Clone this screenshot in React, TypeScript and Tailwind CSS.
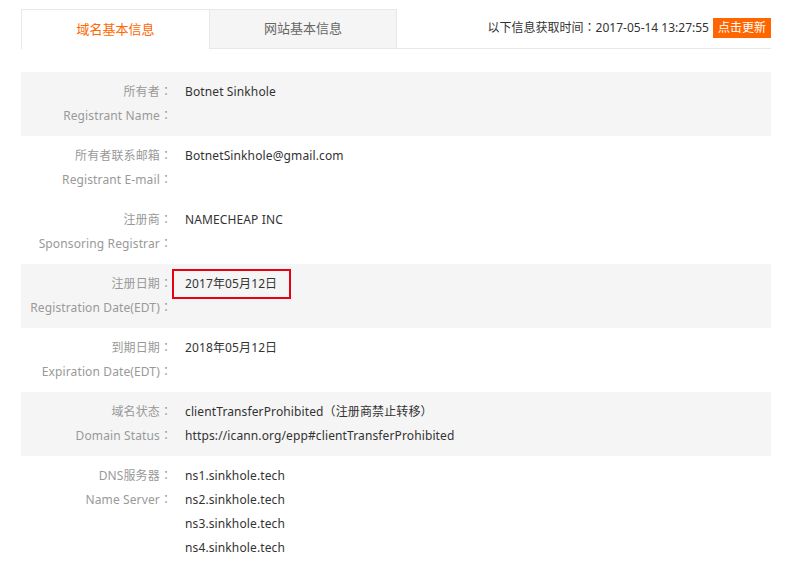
import React from "react";

interface InfoRow {
  label: string;
  labelEn: string;
  values: React.ReactNode[];
  gray: boolean;
  highlight?: boolean;
}

// full-width punctuation centred like the original font does
const Wide: React.FC<{ ch: string }> = ({ ch }) => (
  <span className="font-['Noto_Sans_CJK_JP'] leading-none">{ch}</span>
);

const rows: InfoRow[] = [
  { label: "所有者", labelEn: "Registrant Name", values: ["Botnet Sinkhole"], gray: true },
  { label: "所有者联系邮箱", labelEn: "Registrant E-mail", values: ["BotnetSinkhole@gmail.com"], gray: false },
  { label: "注册商", labelEn: "Sponsoring Registrar", values: ["NAMECHEAP INC"], gray: false },
  { label: "注册日期", labelEn: "Registration Date(EDT)", values: ["2017年05月12日"], gray: true, highlight: true },
  { label: "到期日期", labelEn: "Expiration Date(EDT)", values: ["2018年05月12日"], gray: false },
  {
    label: "域名状态",
    labelEn: "Domain Status",
    values: [
      <>
        clientTransferProhibited
        <Wide ch="（" />
        注册商禁止转移
        <Wide ch="）" />
      </>,
      "https://icann.org/epp#clientTransferProhibited",
    ],
    gray: true,
  },
  {
    label: "DNS服务器",
    labelEn: "Name Server",
    values: ["ns1.sinkhole.tech", "ns2.sinkhole.tech", "ns3.sinkhole.tech", "ns4.sinkhole.tech"],
    gray: false,
  },
];

const Row: React.FC<{ row: InfoRow }> = ({ row }) => {
  return (
    <div className={`flex py-2 text-[12px] leading-6 tracking-[0.12px] ${row.gray ? "bg-[#f5f5f5]" : "bg-white"}`}>
      <div className="w-[151px] shrink-0 text-right text-[#999]">
        <div className="h-6">
          {row.label}
          <Wide ch="：" />
        </div>
        <div className="h-6">
          {row.labelEn}
          <Wide ch="：" />
        </div>
      </div>
      <div className="pl-[13px] text-[#333]">
        {row.values.map((v, i) =>
          row.highlight ? (
            <div key={i} className="-ml-[13px] -my-[3px] h-[30px] w-[119px] border-2 border-[#e60012] py-px pl-[11px]">
              {v}
            </div>
          ) : (
            <div key={i} className="h-6">
              {v}
            </div>
          )
        )}
      </div>
    </div>
  );
};

export default function App() {
  return (
    <div
      className="bg-white px-[21px] pt-[9px]"
      style={{ fontFamily: '"Noto Sans", "Noto Sans CJK SC", sans-serif' }}
    >
      <div className="flex w-[750px] items-stretch">
        <div className="flex h-[40px] w-[188px] items-center justify-center border-l border-t border-[#e8e8e8] bg-white pt-[1px] text-[13px] text-[#ff6600]">
          域名基本信息
        </div>
        <div className="flex h-[40px] w-[188px] items-center justify-center border border-[#e8e8e8] bg-[#f5f5f5] text-[13px] text-[#666]">
          网站基本信息
        </div>
        <div className="flex flex-1 items-center justify-end border-b border-[#e8e8e8] pb-[2px] text-[12px] text-[#333]">
          <span>
            以下信息获取时间
            <Wide ch="：" />
            2017-05-14 13:27:55
          </span>
          <button className="ml-[4px] h-[20px] bg-[#ff6600] px-[5px] text-[12px] leading-5 text-white">
            点击更新
          </button>
        </div>
      </div>
      <div className="mt-[23px] w-[750px]">
        {rows.map((row, i) => (
          <Row key={i} row={row} />
        ))}
      </div>
    </div>
  );
}
